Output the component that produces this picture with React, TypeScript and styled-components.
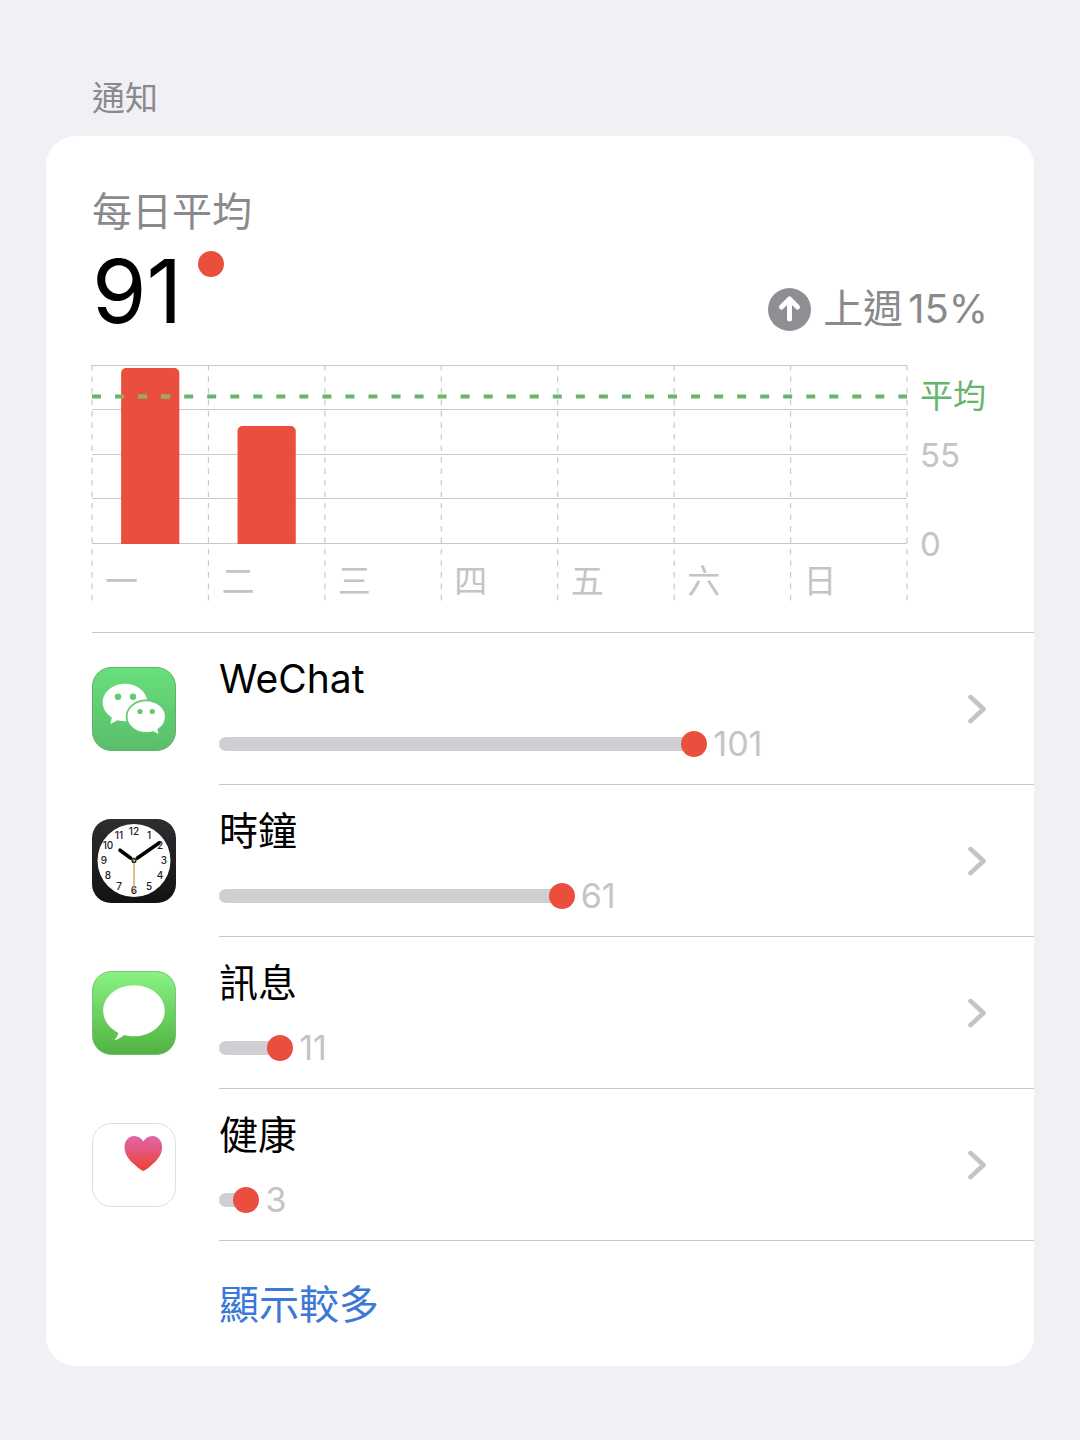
import React from "react";
import styled, { createGlobalStyle } from "styled-components";

const color = {
  page: "#f1f0f5",
  card: "#ffffff",
  text: "#000000",
  secondary: "#8a8a8d",
  tertiary: "#c4c4c6",
  line: "#c8c8ca",
  track: "#cfced3",
  red: "#ea4e3d",
  green: "#67b56c",
  blue: "#3c78d8",
};

const GlobalStyle = createGlobalStyle`
  *, *::before, *::after { box-sizing: border-box; }
  body {
    margin: 0;
    background: ${color.page};
    color: ${color.text};
    font-family: Inter, "Noto Sans CJK TC", sans-serif;
    font-weight: 400;
  }
  h1, h2, p, ul { margin: 0; padding: 0; font-weight: inherit; }
  ul { list-style: none; }
`;

const Page = styled.main`
  min-height: 100vh;
  padding: 76px 46px 74px;
`;

const SectionTitle = styled.h1`
  margin-bottom: 16px;
  padding-left: 46px;
  font-size: 33px;
  line-height: 44px;
  color: ${color.secondary};
`;

const Card = styled.section`
  padding: 52px 0 0 46px;
  border-radius: 30px;
  background: ${color.card};
  overflow: hidden;
`;

const Summary = styled.header`
  padding-right: 46px;
`;

const Caption = styled.h2`
  font-size: 40px;
  line-height: 48px;
  color: ${color.secondary};
`;

const SummaryRow = styled.div`
  display: flex;
  justify-content: space-between;
  align-items: flex-end;
`;

const Average = styled.p`
  display: flex;
  gap: 16px;
  font-size: 88px;
  line-height: 110px;
`;

const Dot = styled.span`
  flex: none;
  width: 26px;
  height: 26px;
  border-radius: 50%;
  background: ${color.red};
`;

const AverageDot = styled(Dot)`
  margin-top: 15px;
`;

const Trend = styled.p`
  display: flex;
  align-items: center;
  gap: 12px;
  padding-bottom: 13px;
  font-size: 40px;
  line-height: 48px;
  color: ${color.secondary};
`;

const TrendText = styled.span`
  display: flex;
  gap: 5px;
`;

const Chart = styled.figure`
  display: grid;
  grid-template-columns: 1fr 68px;
  column-gap: 13px;
  margin: 19px 0 27px;
  padding-right: 46px;
`;

const Plot = styled.div`
  display: grid;
`;

const PlotDrawing = styled.svg`
  grid-area: 1 / 1;
  width: 100%;
  height: 240px;
  overflow: visible;
`;

const Days = styled.ul`
  grid-area: 1 / 1;
  align-self: end;
  display: grid;
  grid-template-columns: repeat(7, 1fr);
  font-size: 33px;
  line-height: 48px;
  color: ${color.tertiary};
`;

const Day = styled.li`
  padding-left: 13px;
`;

const Axis = styled.ul`
  display: grid;
  grid-template-rows: 62px 56px 122px;
  align-items: center;
  font-size: 33px;
  line-height: 40px;
  color: ${color.tertiary};
`;

const AxisLabel = styled.li<{ $average?: boolean }>`
  white-space: nowrap;
  color: ${(p) => (p.$average ? color.green : color.tertiary)};
`;

const AppList = styled.ul`
  border-top: 1px solid ${color.line};
`;

const AppLink = styled.a`
  display: flex;
  align-items: center;
  gap: 43px;
  color: inherit;
  text-decoration: none;
`;

const AppIcon = styled.svg`
  flex: none;
  width: 84px;
  height: 84px;
`;

const AppBody = styled.div`
  flex: 1;
  display: flex;
  align-items: center;
  padding: 22px 48px 22px 0;
  border-bottom: 1px solid ${color.line};
`;

const AppInfo = styled.div`
  flex: 1;
  display: grid;
  row-gap: 23px;
`;

const AppName = styled.span`
  font-size: 39px;
  line-height: 48px;
`;

const Usage = styled.span`
  display: flex;
  align-items: center;
  gap: 6px;
  font-size: 34px;
  line-height: 36px;
  color: ${color.tertiary};
`;

const Track = styled.span`
  display: flex;
  align-items: center;
`;

const TrackBar = styled.span`
  flex: 1;
  height: 14px;
  margin-right: -8px;
  border-radius: 7px 0 0 7px;
  background: ${color.track};
`;

const Chevron = styled.svg`
  flex: none;
  width: 18px;
  height: 30px;
`;

const Footer = styled.footer`
  padding: 38px 46px 35px 127px;
`;

const MoreButton = styled.button`
  display: block;
  padding: 0;
  border: 0;
  background: none;
  font: inherit;
  font-size: 40px;
  line-height: 52px;
  color: ${color.blue};
  cursor: pointer;
`;

const days = ["一", "二", "三", "四", "五", "六", "日"];
const bars = [
  { day: 0, height: 176 },
  { day: 1, height: 118 },
];
const gridRows = [0.5, 44.5, 89.5, 133.5, 178.5];
const cell = 100 / 7;

function WeeklyPlot() {
  return (
    <PlotDrawing aria-hidden="true">
      <defs>
        <clipPath id="bar-area">
          {bars.map((b) => (
            <rect key={b.day} x={`${(b.day + 0.25) * cell}%`} y={179 - b.height} width={`${cell / 2}%`} height={b.height} />
          ))}
        </clipPath>
      </defs>
      {gridRows.map((y) => (
        <line key={y} x1="0" x2="100%" y1={y} y2={y} stroke={color.line} />
      ))}
      {[0, 1, 2, 3, 4, 5, 6, 7].map((i) => (
        <line key={i} x1={`${i * cell}%`} x2={`${i * cell}%`} y1="0" y2="236" stroke={color.line} strokeWidth="1.2" strokeDasharray="5.5 6" />
      ))}
      <svg width="100%" height="179">
        {bars.map((b) => (
          <rect key={b.day} x={`${(b.day + 0.25) * cell}%`} y={179 - b.height} width={`${cell / 2}%`} height={b.height + 10} rx="5" fill={color.red} />
        ))}
      </svg>
      <line x1="0" x2="100%" y1="31.5" y2="31.5" stroke={color.green} strokeWidth="4" strokeDasharray="9 14.040" />
      <line x1="0" x2="100%" y1="31.5" y2="31.5" stroke="#a2a75f" strokeWidth="4" strokeDasharray="9 14.040" clipPath="url(#bar-area)" />
    </PlotDrawing>
  );
}

function WeChatIcon() {
  return (
    <AppIcon viewBox="0 0 84 84" aria-hidden="true">
      <defs>
        <linearGradient id="wechat" x1="0" y1="0" x2="0" y2="1">
          <stop offset="0" stopColor="#68df7c" />
          <stop offset="1" stopColor="#5bbd6a" />
        </linearGradient>
      </defs>
      <rect x="0.5" y="0.5" width="83" height="83" rx="19" fill="url(#wechat)" stroke="#5fae6b" />
      <path fill="#fff" d="M33 16.7c12.3 0 22.3 8.4 22.3 18.8S45.3 54.3 33 54.3c-2.6 0-5.1-.4-7.4-1.1L18.4 57l1.400-6.600c-5.500-3.400-9.100-8.800-9.100-14.900 0-10.400 10-18.800 22.300-18.800z" />
      <circle cx="26" cy="29.700" r="3.200" fill="#60cb72" />
      <circle cx="41" cy="29.700" r="3.200" fill="#60cb72" />
      <path fill="#fff" stroke="#60cb72" strokeWidth="1.800" d="M54.200 33.400c-10.800 0-19.600 7.300-19.600 16.300S43.400 66 54.200 66c2.400 0 4.700-.4 6.800-1l6.800 3.600-1.500-6c4.600-3 7.500-7.600 7.500-12.900 0-9-8.800-16.300-19.600-16.300z" />
      <circle cx="48" cy="44.500" r="2.600" fill="#60c871" />
      <circle cx="60.300" cy="44.500" r="2.600" fill="#60c871" />
    </AppIcon>
  );
}

function ClockIcon() {
  const numerals = Array.from({ length: 12 }, (_, i) => i + 1);
  return (
    <AppIcon viewBox="0 0 84 84" aria-hidden="true">
      <defs>
        <linearGradient id="clock" x1="0" y1="0" x2="0" y2="1">
          <stop offset="0" stopColor="#2e2e30" />
          <stop offset="1" stopColor="#121213" />
        </linearGradient>
      </defs>
      <rect width="84" height="84" rx="19" fill="url(#clock)" />
      <circle cx="42" cy="41.500" r="36.500" fill="#fff" />
      {numerals.map((n) => {
        const angle = (n * Math.PI) / 6;
        return (
          <text
            key={n}
            x={42 + 30 * Math.sin(angle)}
            y={41.5 - 29.5 * Math.cos(angle)}
            dy="3.600"
            textAnchor="middle"
            fontFamily="Inter, sans-serif"
            fontSize="10"
            fontWeight="500"
            fill="#1c1c1e"
          >
            {n}
          </text>
        );
      })}
      <path d="M42 41.500 38 38.700M42 41.500 46 38.600" stroke="#000" strokeWidth="1.500" />
      <path d="M38.500 39 28 31.200M45.500 39 67 24" stroke="#000" strokeWidth="3.600" strokeLinecap="round" />
      <path d="M42 38v36" stroke="#c9953f" strokeWidth="1.200" />
      <circle cx="42" cy="41.500" r="2.600" fill="#1c1c1e" />
      <circle cx="42" cy="41.500" r="1.300" fill="#e0a850" />
    </AppIcon>
  );
}

function MessagesIcon() {
  return (
    <AppIcon viewBox="0 0 84 84" aria-hidden="true">
      <defs>
        <linearGradient id="messages" x1="0" y1="0" x2="0" y2="1">
          <stop offset="0" stopColor="#88f384" />
          <stop offset="1" stopColor="#50b241" />
        </linearGradient>
      </defs>
      <rect x="0.500" y="0.500" width="83" height="83" rx="19" fill="url(#messages)" stroke="#5fae58" strokeOpacity="0.700" />
      <path fill="#fff" d="M42 14.300c17 0 30.800 11.400 30.800 25.500S59 65.300 42 65.300c-3.400 0-6.700-.5-9.800-1.300-3.100 2.700-6.200 4.600-9.900 5 2-1.900 3.700-4.300 4-7.200C17.200 57.200 11.200 49.100 11.200 39.800c0-14.100 13.800-25.500 30.800-25.500z" />
    </AppIcon>
  );
}

function HealthIcon() {
  return (
    <AppIcon viewBox="0 0 84 84" aria-hidden="true">
      <defs>
        <linearGradient id="health" x1="0" y1="0" x2="0" y2="1">
          <stop offset="0" stopColor="#e066ad" />
          <stop offset="1" stopColor="#ec4130" />
        </linearGradient>
      </defs>
      <rect x="0.500" y="0.500" width="83" height="83" rx="19" fill="#fff" stroke="#dededf" />
      <path fill="url(#health)" d="M51.300 48C50.300 48 45.500 44.500 41.500 40.800 36 35.700 32.500 30.500 32.500 24.200 32.500 17.500 36.900 13 42.300 13c4 0 7.200 2.100 9 5.400C53.100 15.100 56.300 13 60.300 13c5.400 0 9.800 4.500 9.800 11.200 0 6.300-3.500 11.500-9 16.600C57.100 44.500 52.300 48 51.300 48z" />
    </AppIcon>
  );
}

/* `share` is the length of the bar as a part of the info column, in per cent. */
const apps = [
  { name: "WeChat", count: 101, share: 65.2, Icon: WeChatIcon },
  { name: "時鐘", count: 61, share: 47.5, Icon: ClockIcon },
  { name: "訊息", count: 11, share: 9.9, Icon: MessagesIcon },
  { name: "健康", count: 3, share: 5.4, Icon: HealthIcon },
];

export default function App() {
  return (
    <>
      <GlobalStyle />
      <Page lang="zh-Hant">
        <SectionTitle>通知</SectionTitle>
        <Card>
          <Summary>
            <Caption>每日平均</Caption>
            <SummaryRow>
              <Average>
                91
                <AverageDot />
              </Average>
              <Trend>
                <svg width="43" height="43" viewBox="0 0 43 43" aria-hidden="true">
                  <circle cx="21.500" cy="21.500" r="21.500" fill="#8e8e93" />
                  <path d="M21.500 31V11.500M13.500 19 21.500 11l8 8" fill="none" stroke="#fff" strokeWidth="5" strokeLinecap="round" strokeLinejoin="round" />
                </svg>
                <TrendText>
                  <span>上週</span>
                  <span>15%</span>
                </TrendText>
              </Trend>
            </SummaryRow>
          </Summary>
          <Chart>
            <Plot>
              <WeeklyPlot />
              <Days>
                {days.map((d) => (
                  <Day key={d}>{d}</Day>
                ))}
              </Days>
            </Plot>
            <Axis>
              <AxisLabel $average>平均</AxisLabel>
              <AxisLabel>55</AxisLabel>
              <AxisLabel>0</AxisLabel>
            </Axis>
          </Chart>
          <AppList>
            {apps.map(({ name, count, share, Icon }) => (
              <li key={name}>
                <AppLink href="#">
                  <Icon />
                  <AppBody>
                    <AppInfo>
                      <AppName>{name}</AppName>
                      <Usage>
                        <Track style={{ width: `${share}%` }}>
                          <TrackBar />
                          <Dot />
                        </Track>
                        {count}
                      </Usage>
                    </AppInfo>
                    <Chevron viewBox="0 0 18 30" aria-hidden="true">
                      <path d="M2.500 3 15.500 15 2.500 27" fill="none" stroke={color.tertiary} strokeWidth="4.600" strokeLinecap="round" strokeLinejoin="round" />
                    </Chevron>
                  </AppBody>
                </AppLink>
              </li>
            ))}
          </AppList>
          <Footer>
            <MoreButton type="button">顯示較多</MoreButton>
          </Footer>
        </Card>
      </Page>
    </>
  );
}
